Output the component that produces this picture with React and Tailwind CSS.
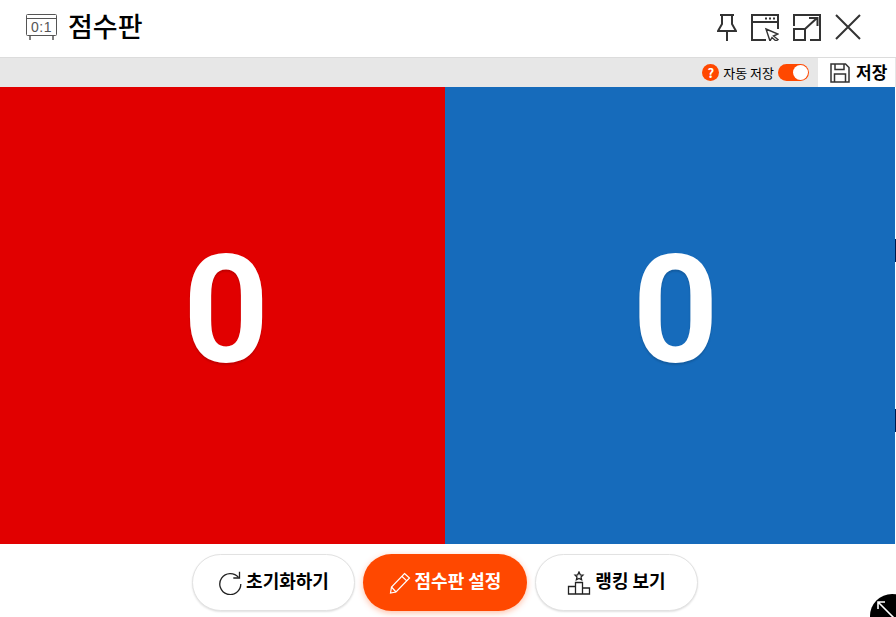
import React from "react";

const FONT = "font-['Noto_Sans_CJK_KR','Noto_Sans',sans-serif]";

function ScoreIcon() {
  return (
    <svg width="31" height="26" viewBox="0 0 31 26" fill="none" stroke="#555" strokeWidth="1" className="block">
      <rect x="0.5" y="0.5" width="30" height="21" rx="1" />
      <path d="M0.5 4.5H30.5" />
      <path d="M4 22v4M27 22v4" strokeWidth="1.5" />
      <text x="15.5" y="18" textAnchor="middle" fontSize="14" fontFamily="Liberation Sans, sans-serif" fill="#555" stroke="none" letterSpacing="0.5">0:1</text>
    </svg>
  );
}

function PinIcon() {
  return (
    <svg width="20" height="27" viewBox="0 0 20 27" fill="none" stroke="#333" strokeWidth="2">
      <path d="M3 1H17M5 1V10L1 17H19L15 10V1M10 17V27" />
    </svg>
  );
}

function WindowIcon() {
  return (
    <svg width="28" height="27" viewBox="0 0 28 27" fill="none" stroke="#333" strokeWidth="2">
      <path d="M15 26H1V1H27V15" />
      <path d="M1 8H27" />
      <path d="M14 4.5h2M18 4.5h2M22 4.5h2" />
      <path d="M15 15L27 20L22.5 22L27 25.5L25 27L21 23.5L19 27Z" strokeWidth="1.4" fill="#fff" />
    </svg>
  );
}

function ExpandIcon() {
  return (
    <svg width="28" height="27" viewBox="0 0 28 27" fill="none" stroke="#333" strokeWidth="2">
      <path d="M1 12V1H27V26H17" />
      <path d="M1 15H12V26H1Z" />
      <path d="M12 15L24 4M16 4H24.5V12" />
    </svg>
  );
}

function CloseIcon() {
  return (
    <svg width="26" height="26" viewBox="0 0 26 26" fill="none" stroke="#333" strokeWidth="2">
      <path d="M1 1L25 25M25 1L1 25" />
    </svg>
  );
}

function SaveIcon() {
  return (
    <svg width="20" height="20" viewBox="0 0 20 20" fill="none" stroke="#333" strokeWidth="1.5">
      <path d="M1 1H15.5L19 4.5V19H1Z" />
      <path d="M5 1V6.5H14V1M4.5 19V11H15.5V19" />
    </svg>
  );
}

function ResetIcon() {
  return (
    <svg width="24" height="24" viewBox="0 0 24 24" fill="none" stroke="#222" strokeWidth="1.3">
      <path d="M20.5 6.5A10.5 10.5 0 1 0 22.8 13" />
      <path d="M21.5 0.8V7H15.3" />
    </svg>
  );
}

function PencilIcon() {
  return (
    <svg width="22" height="22" viewBox="0 0 22 22" fill="none" stroke="#fff" strokeWidth="1.2">
      <path d="M15.5 1.5L20.5 6L7 20L1.5 21L2.5 15Z" />
      <path d="M12.8 4.3L17.8 8.9M2.5 15L7 20" />
    </svg>
  );
}

function RankIcon() {
  return (
    <svg width="24" height="24" viewBox="0 0 24 24" fill="none" stroke="#222" strokeWidth="1.3">
      <path d="M12 1L13.3 3.8L16 4.1L14 6L14.6 8.8L12 7.4L9.4 8.8L10 6L8 4.1L10.7 3.8Z" />
      <path d="M8.5 11.5H15.5V23H8.5ZM1.5 15.5H8.5V23H1.5ZM15.5 17H22.5V23H15.5Z" />
    </svg>
  );
}

function ScorePanel({ bg, pad }) {
  return (
    <div className={`flex items-center justify-center ${bg} ${pad}`}>
      <span className="font-['Roboto',sans-serif] font-bold text-[150px] text-white leading-none [text-shadow:0_2px_2px_rgba(0,0,0,0.15)] mb-[10px]">0</span>
    </div>
  );
}

function FootButton({ icon, label, primary }) {
  return (
    <button
      className={`h-[57px] rounded-full flex items-center justify-center gap-[4px] text-[18px] font-bold ${
        primary
          ? "w-[164px] bg-[#ff4800] text-white shadow-[0_2px_6px_rgba(255,72,0,0.35)]"
          : "w-[163px] bg-white text-black border border-[#e2e2e2] shadow-[0_1px_2px_rgba(0,0,0,0.12)]"
      }`}
    >
      {icon}
      <span className="pb-[4px]">{label}</span>
    </button>
  );
}

export default function App() {
  return (
    <div className={`relative w-[896px] h-[617px] overflow-hidden bg-white flex flex-col ${FONT}`}>
      {/* title bar */}
      <div className="h-[58px] shrink-0 flex items-center justify-between border-b border-[#dcdcdc] pl-[26px] pr-[35px]">
        <div className="flex items-center gap-[11px] pb-[3px]">
          <ScoreIcon />
          <h1 className="text-[27px] font-medium text-black leading-none pb-[3px]">점수판</h1>
        </div>
        <div className="flex items-center gap-[14px] pb-[3px]">
          <PinIcon />
          <WindowIcon />
          <ExpandIcon />
          <CloseIcon />
        </div>
      </div>

      {/* save bar */}
      <div className="h-[29px] shrink-0 flex items-center justify-end bg-[#e7e7e7] pr-[1px]">
        <span className="w-[17px] h-[17px] rounded-full bg-[#ff4800] text-white text-[13px] font-bold flex items-center justify-center leading-none">?</span>
        <span className="ml-[4px] text-[13px] text-black leading-none">자동 저장</span>
        <div className="ml-[4px] w-[31px] h-[17px] rounded-full bg-[#ff4800] flex items-center justify-end pr-[1px]">
          <div className="w-[15px] h-[15px] rounded-full bg-white" />
        </div>
        <div className="ml-[9px] w-[77px] h-[29px] bg-white flex items-center pl-[12px] gap-[6px]">
          <SaveIcon />
          <span className="text-[17px] font-bold text-black leading-none pb-[3px]">저장</span>
        </div>
      </div>

      {/* scores */}
      <div className="h-[457px] shrink-0 flex w-[895px]">
        <ScorePanel bg="bg-[#e10000]" pad="w-[445px] pl-[7px]" />
        <ScorePanel bg="bg-[#166bbb]" pad="w-[450px] pl-[11px]" />
      </div>

      {/* buttons */}
      <div className="flex-1 flex justify-center gap-[8px] pt-[10px] pr-[6px]">
        <FootButton icon={<ResetIcon />} label="초기화하기" />
        <FootButton icon={<PencilIcon />} label="점수판 설정" primary />
        <FootButton icon={<RankIcon />} label="랭킹 보기" />
      </div>

      {/* right edge marks */}
      <div className="absolute right-0 top-[239px] w-[1px] h-[23px] bg-[#001a4d]" />
      <div className="absolute right-0 top-[409px] w-[1px] h-[23px] bg-[#001a4d]" />

      {/* resize handle */}
      <div className="absolute left-[870px] top-[594px] w-[44px] h-[44px] rounded-full bg-black">
        <svg width="20" height="20" viewBox="0 0 20 20" fill="none" stroke="#fff" strokeWidth="1.6" className="ml-[6px] mt-[6px]">
          <path d="M2 2L18 18M2 9V2H9" />
        </svg>
      </div>
    </div>
  );
}
